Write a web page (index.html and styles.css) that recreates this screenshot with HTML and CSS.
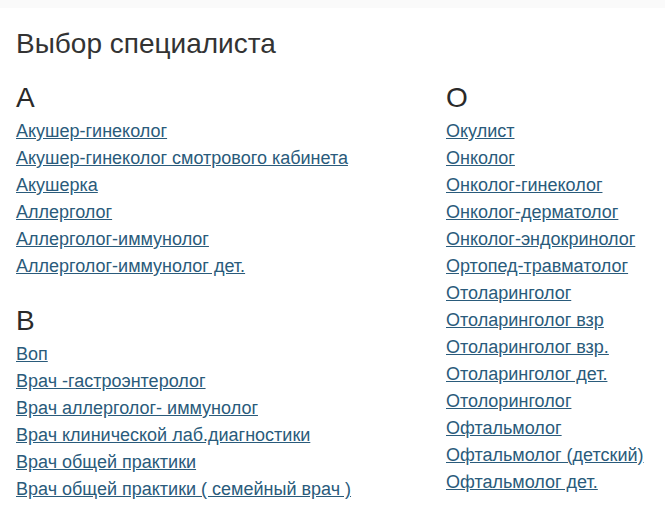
FILE: index.html
```html
<!DOCTYPE html>
<html lang="ru">
<head>
<meta charset="utf-8">
<title>Выбор специалиста</title>
<link rel="stylesheet" href="styles.css">
</head>
<body>
<div class="topbar"></div>
<main class="page">
  <h3 class="title">Выбор специалиста</h3>
  <div class="columns">
    <div class="col">
      <section class="group">
        <h2 class="letter">А</h2>
        <ul class="links">
          <li><a href="#">Акушер-гинеколог</a></li>
          <li><a href="#">Акушер-гинеколог смотрового кабинета</a></li>
          <li><a href="#">Акушерка</a></li>
          <li><a href="#">Аллерголог</a></li>
          <li><a href="#">Аллерголог-иммунолог</a></li>
          <li><a href="#">Аллерголог-иммунолог дет.</a></li>
        </ul>
      </section>
      <section class="group">
        <h2 class="letter">В</h2>
        <ul class="links">
          <li><a href="#">Воп</a></li>
          <li><a href="#">Врач -гастроэнтеролог</a></li>
          <li><a href="#">Врач аллерголог- иммунолог</a></li>
          <li><a href="#">Врач клинической лаб.диагностики</a></li>
          <li><a href="#">Врач общей практики</a></li>
          <li><a href="#">Врач общей практики ( семейный врач )</a></li>
        </ul>
      </section>
    </div>
    <div class="col">
      <section class="group">
        <h2 class="letter">О</h2>
        <ul class="links">
          <li><a href="#">Окулист</a></li>
          <li><a href="#">Онколог</a></li>
          <li><a href="#">Онколог-гинеколог</a></li>
          <li><a href="#">Онколог-дерматолог</a></li>
          <li><a href="#">Онколог-эндокринолог</a></li>
          <li><a href="#">Ортопед-травматолог</a></li>
          <li><a href="#">Отоларинголог</a></li>
          <li><a href="#">Отоларинголог взр</a></li>
          <li><a href="#">Отоларинголог взр.</a></li>
          <li><a href="#">Отоларинголог дет.</a></li>
          <li><a href="#">Отолоринголог</a></li>
          <li><a href="#">Офтальмолог</a></li>
          <li><a href="#">Офтальмолог (детский)</a></li>
          <li><a href="#">Офтальмолог дет.</a></li>
        </ul>
      </section>
    </div>
  </div>
</main>
</body>
</html>
```

FILE: styles.css
```css
html, body {
  margin: 0;
  padding: 0;
  background: #ffffff;
}

body {
  font-family: "Liberation Sans", Arial, sans-serif;
  color: #333333;
}

.topbar {
  height: 8px;
  background: #fafafa;
}

.page {
  padding: 0 16px;
}

.title {
  margin: 0;
  padding-top: 20px;
  font-size: 28px;
  font-weight: normal;
  line-height: 32px;
}

.columns {
  display: grid;
  grid-template-columns: 430px 1fr;
  margin-top: 21px;
}

.group + .group {
  margin-top: 24px;
}

.letter {
  margin: 0 0 3px;
  font-size: 28px;
  font-weight: normal;
  line-height: 34px;
  color: #2a2a2a;
}

.links {
  list-style: none;
  margin: 0;
  padding: 0;
}

.links li {
  line-height: 27px;
  font-size: 18px;
}

.links a {
  color: #2a5b7b;
  text-decoration: underline;
}
```
